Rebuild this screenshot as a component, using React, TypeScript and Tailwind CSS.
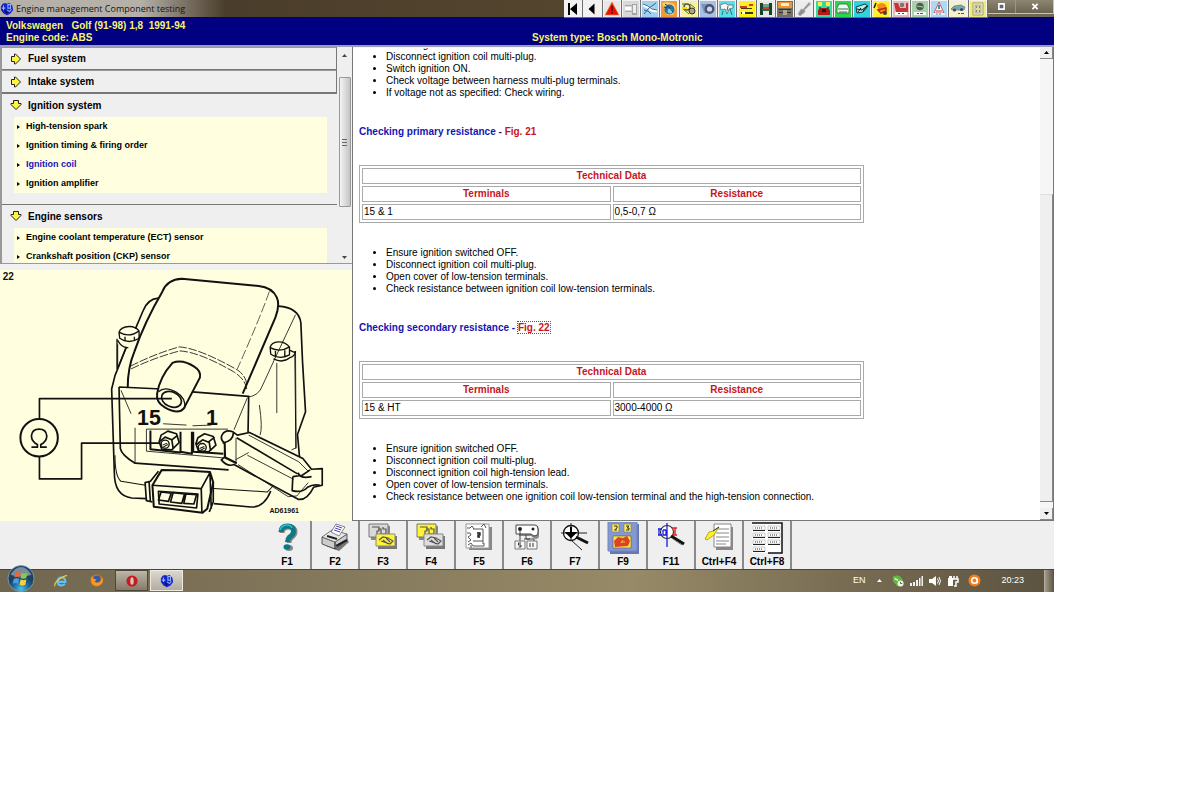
import React from "react";

type IconProps = { children: React.ReactNode; bg?: string };

function SmallIcon({ children, bg = "#f2f2f2" }: IconProps) {
  return (
    <svg viewBox="0 0 16 16" className="block h-4 w-4" aria-hidden="true">
      <rect width="16" height="16" fill={bg} />
      {children}
    </svg>
  );
}

const systems: { name: string; icon: React.ReactNode }[] = [
  { name: "First", icon: <SmallIcon><path d="M3 2h2v12H3zM12 2v12L5 8z" fill="#000" /></SmallIcon> },
  { name: "Previous", icon: <SmallIcon><path d="M10.5 2.500v11L4.500 8z" fill="#000" /></SmallIcon> },
  { name: "Warnings", icon: <SmallIcon bg="#e8e6e6"><path d="M8 1l7 13H1z" fill="#f00d0d" stroke="#d8a030" strokeWidth=".6" /><path d="M7.300 5h1.500v5H7.300zM7.300 11h1.500v1.600H7.300z" fill="#5a0000" /></SmallIcon> },
  { name: "Identification", icon: <SmallIcon bg="#d8d8d8"><path d="M2 4h9v1H2zM2 10h9v1H2z" fill="#aaa" /><path d="M2 6h6v3H2z" fill="#fff" /><path d="M9 3h5v11H9z" fill="#a4a4a4" /><path d="M10 4h3v8h-3z" fill="#eee" /></SmallIcon> },
  { name: "Service", icon: <SmallIcon bg="#9fd0f2"><path d="M1 4l5 2 4 3 5 1" stroke="#fff" strokeWidth="3" fill="none" /><path d="M1 3l5 2 4 3 5 1M2 13l5-6 7-5M2 9l4 1 3 3" stroke="#3d6686" fill="none" /></SmallIcon> },
  { name: "Engine", icon: <SmallIcon bg="#f39a36"><path d="M1 2l5-1 7 2 2 4-3 7H6z" fill="#f8d060" /><circle cx="8.500" cy="8.500" r="5" fill="#2770a8" /><circle cx="9" cy="10" r="2.500" fill="#82cce8" /><path d="M4 3l4 3 4 5M3 6l3 1" stroke="#163a5a" fill="none" /></SmallIcon> },
  { name: "Timing belt", icon: <SmallIcon bg="#f6f29b"><circle cx="6" cy="6" r="3" fill="none" stroke="#555" strokeWidth="1.500" /><circle cx="11" cy="10" r="3" fill="#a9a980" stroke="#333" /><path d="M1 3h4M2 8l6 5M9 3l5 4" stroke="#706b20" /><path d="M1 6h5v2H1z" fill="#f0e000" /></SmallIcon> },
  { name: "Wheels", icon: <SmallIcon bg="#a8bfe4"><path d="M1 3h7v3l-2 6H4z" fill="#7e93bb" /><circle cx="9.500" cy="8" r="5" fill="#48536f" /><circle cx="9.500" cy="8" r="2.600" fill="#cdd5e6" /></SmallIcon> },
  { name: "Air conditioning", icon: <SmallIcon bg="#5be0e8"><path d="M1 4l5-2 3 2 5 0v3l-4 1-2 5-2-5-4 1z" fill="#f5f5f5" stroke="#555" strokeWidth=".7" /><path d="M11 8l2 6M4 10l-1 4M9 5l-1 5" stroke="#207888" /></SmallIcon> },
  { name: "Fuses", icon: <SmallIcon bg="#fff01c"><path d="M1 5h7v2H1zM10 3h4v2h-4z" fill="#d93426" /><path d="M2 7h11v1H2zM2 11h12v2H2z" fill="#3b3a1c" /><path d="M3 10h3v3H3z" fill="#fff" /></SmallIcon> },
  { name: "Lift points", icon: <SmallIcon bg="#e5e9e5"><path d="M2 2h3v12H2zM11 2h3v12h-3z" fill="#19402a" /><path d="M5 6h6v2H5z" fill="#d73838" /><path d="M5 3h6v3H5z" fill="#75a085" /><path d="M4 8h8v2H4z" fill="#177346" /></SmallIcon> },
  { name: "Instrument display", icon: <SmallIcon bg="#777064"><path d="M1 1h14v6H1z" fill="#e99835" /><path d="M4 2h8v3H4z" fill="#fff0bd" /><path d="M2 8h12v1H2zM2 11h12v1H2z" fill="#333" /><path d="M6 9h4v5H6z" fill="#b2a78f" /></SmallIcon> },
  { name: "Repair", icon: <SmallIcon bg="#ececec"><path d="M13 1.500l1.500 1.500-6 6 .5 2-5 4-2-2 3-5 2 .5z" fill="#8e8e8e" stroke="#b0b0b0" strokeWidth=".7" /></SmallIcon> },
  { name: "Ignition", icon: <SmallIcon bg="#39d9a0"><path d="M2 1h4v4H2zM10 1h4v4h-4z" fill="#ffef32" /><path d="M2 9l3-2h6l3 2v5H2z" fill="#b51a16" /><path d="M6 8h4v3H6z" fill="#181818" /><path d="M4 6v2M12 6v2" stroke="#111" /></SmallIcon> },
  { name: "Vehicle", icon: <SmallIcon bg="#27d94a"><path d="M4 3h8l2 4v5H2V7z" fill="#eefaf0" stroke="#286b35" strokeWidth=".8" /><path d="M3 8h10M4 11h8" stroke="#3b7047" /></SmallIcon> },
  { name: "Diagnostics", icon: <SmallIcon bg="#2cd5de"><path d="M2 6l9-3 3 2-5 6-6 1z" fill="#bfe8ea" stroke="#073b42" /><path d="M3 8l5 1 5-4M4 11l3-4M9 10l4-5" stroke="#111" fill="none" /></SmallIcon> },
  { name: "Trouble codes", icon: <SmallIcon bg="#fff12c"><path d="M4 4q5-4 9 0v5q-5 4-8-1z" fill="#f38b1f" /><path d="M5 9l8-2v3l-5 2z" stroke="#b32812" fill="none" strokeWidth="1.500" /><path d="M3 2L1 7" stroke="#222" strokeWidth="1.500" /><circle cx="12" cy="12" r="2" fill="#444" /></SmallIcon> },
  { name: "Airbag", icon: <SmallIcon bg="#e7bcbc"><path d="M1 2h4l2 5h6V2h2v9H3z" fill="#c73535" /><circle cx="9" cy="4" r="2.200" fill="#777" /><path d="M2 11h12v3H2z" fill="#fff" /><path d="M5 12h2v1H5zM9 12h2v1H9z" fill="#aa2020" /></SmallIcon> },
  { name: "Steering", icon: <SmallIcon bg="#a9cfac"><circle cx="8" cy="5.500" r="3.700" fill="#4c5d4e" /><path d="M5 5l6 1" stroke="#b4c7b5" /><path d="M2 11h12v3H2z" fill="#f5f8f5" /><path d="M5 12h2v1H5zM8 12h3v1H8z" fill="#555" /></SmallIcon> },
  { name: "Key programming", icon: <SmallIcon bg="#aadaf5"><path d="M8 1l5 11H3z" fill="#f4faff" stroke="#c06060" strokeWidth="1" /><path d="M7 4h2v4H7z" fill="#5d85a8" /><path d="M2 12h12v2H2z" fill="#e6f2fa" /><path d="M5 10h6" stroke="#c33" /><path d="M5 13h5" stroke="#5d85a8" strokeDasharray="2 1" /></SmallIcon> },
  { name: "Tyres", icon: <SmallIcon bg="#f3f2cd"><path d="M1 8l3-3 7-1 4 2-1 3H2z" fill="#79a9ae" stroke="#4d7077" strokeWidth=".6" /><circle cx="4.500" cy="9" r="1.500" fill="#346" /><circle cx="11.500" cy="8.500" r="1.500" fill="#346" /><path d="M8 12h2v1H8zM11 12h3v1h-3z" fill="#555" /></SmallIcon> },
  { name: "Switches", icon: <SmallIcon bg="#f1e978"><path d="M3 2h10v12H3z" fill="#f6f3c8" stroke="#a5a06a" /><path d="M5 4h6v8H5z" fill="#ddd8b0" stroke="#777" strokeWidth=".5" /><path d="M6 5h1v2H6zM9 5h1v2H9zM6 9h1v2H6zM9 9h1v2H9z" fill="#8a865e" /></SmallIcon> },
];

function KeyIcon({ children }: { children: React.ReactNode }) {
  return <svg viewBox="0 0 36 34" className="block h-[34px] w-9" aria-hidden="true">{children}</svg>;
}

const cardShapes = (back: string, front: string) => (
  <>
    <path d="M6 4h19v14H6z" fill="#888" />
    <path d="M4 2h19v13H4z" fill={back} stroke="#777" />
    <path d="M7 5h7v4h-2v4M13 7h3v5h5V7h-3V5" fill="none" stroke="#555" strokeWidth="1.200" />
    <path d="M13 14h19v13H13z" fill="#777" />
    <path d="M11 12h19v12H11z" fill={front} stroke="#888" />
    <path d="M14 18l4-3 5 1 5 3-3 3-6-2-3-1M18 18l5 4M21 16l4 4" fill="none" stroke="#555" strokeWidth="1.200" />
  </>
);

const keys: { label: string; icon: React.ReactNode }[] = [
  {
    label: "F1",
    icon: <KeyIcon><path d="M13 11q0-6 7-6 6 0 6 5 0 3-4 6-2 2-2 5" fill="none" stroke="#888" strokeWidth="5" /><path d="M12 10q0-6 6.500-6 6 0 6 5.500 0 3-4 5.500-2 2-2 5" fill="none" stroke="#087b85" strokeWidth="5" /><path d="M11 8q2-5 7-5 4 0 5 3" fill="none" stroke="#35bfc8" strokeWidth="1.500" /><ellipse cx="20" cy="26" rx="4" ry="3" fill="#888" /><ellipse cx="18" cy="25" rx="3.500" ry="2.700" fill="#087b85" /></KeyIcon>,
  },
  {
    label: "F2",
    icon: <KeyIcon><path d="M9 24l13 5 10-9-2-3z" fill="#777" /><path d="M5 15l13 5v7L5 22zM18 20l12-8v6l-12 9z" fill="#ccc" stroke="#333" strokeWidth=".8" /><path d="M5 15l10-7 15 4-12 8z" fill="#e9e9e9" stroke="#555" strokeWidth=".8" /><path d="M14 10l5-8 9 3-6 9z" fill="#fff" stroke="#555" strokeWidth=".7" /><path d="M19 4l6 2M18 6l6 2M17 8l6 2" stroke="#4b4bbd" /><path d="M10 14l10 3M19 24l11-6" stroke="#222" strokeWidth="2" /></KeyIcon>,
  },
  { label: "F3", icon: <KeyIcon>{cardShapes("#d9d9d9", "#fff43a")}</KeyIcon> },
  { label: "F4", icon: <KeyIcon>{cardShapes("#fff43a", "#dedede")}</KeyIcon> },
  {
    label: "F5",
    icon: <KeyIcon><path d="M8 5h23v23H8z" fill="#888" /><path d="M5 2h23v24H5z" fill="#fff" stroke="#999" /><path d="M6 6h3l2-2 2 3M6 11h3l1 2-3 2 3 3-3 2M12 7h10v12H12M20 5l3-3 2 4M7 23l3-2 2 3h11v-3M10 26v-3M22 19v3" fill="none" stroke="#555" strokeWidth="1" /><path d="M16 11h3v2h-2v2h2" fill="none" stroke="#111" strokeWidth="1.300" /></KeyIcon>,
  },
  {
    label: "F6",
    icon: <KeyIcon><path d="M9 7q0-3 4-3h13q4 0 4 4v6q0 3-4 3l-4-3H10z" fill="#888" /><path d="M7 3h19q3 0 3 4v4q0 3-4 3l-3-2H7z" fill="#fff" stroke="#444" /><circle cx="11" cy="7" r="2" fill="#222" /><circle cx="24" cy="7" r="1.500" fill="#222" /><path d="M11 9v10M17 13v4h8v3M15 17h6" fill="none" stroke="#444" /><path d="M6 19h10v8H6zM18 19h10v8H18z" fill="#f8f8f8" stroke="#777" /><path d="M12 21H9.500v2H12v2H9.500M21 21v4M24 21v4" fill="none" stroke="#333" /></KeyIcon>,
  },
  {
    label: "F7",
    icon: <KeyIcon><circle cx="14" cy="11" r="7.500" fill="#fff" stroke="#111" strokeWidth="1.300" /><path d="M14 1v17M4 11h26M14 18l11 10" stroke="#222" /><path d="M14 5v9M10 11h8l-4 4z" fill="#000" stroke="#000" strokeWidth="2" /><path d="M19 15l12 6" stroke="#111" strokeWidth="3" /></KeyIcon>,
  },
  {
    label: "F9",
    icon: <KeyIcon><path d="M5 2h29v30H5z" fill="#6678b2" /><path d="M3 0h29v29H3z" fill="#8598d4" stroke="#7385bd" /><path d="M7 2h7v8H7zM19 2h7v8h-7z" fill="#ffed54" stroke="#777" strokeWidth=".6" /><path d="M9 4h3v2L9.500 8H12M21 4h3l-2 2h2v2h-3" fill="none" stroke="#333" /><path d="M8 14h18v12H8z" fill="#ffe64a" stroke="#555" strokeWidth=".6" /><path d="M9 19l4-4 5 1 4-2 3 5-2 5-13 1z" fill="#db4324" /><path d="M16 20h4M18 18l-2 3" stroke="#f5c33b" /></KeyIcon>,
  },
  {
    label: "F11",
    icon: <KeyIcon><circle cx="14" cy="10" r="6.500" fill="#fff" stroke="#333" strokeWidth="1.200" /><path d="M5 7h4M5 13h4M6 7v6M14 1v24M10 8h3M10 8v5h3v-5" fill="none" stroke="#1a1ae0" strokeWidth="1.300" /><path d="M19 6h5M19 13h5M22 6v7" stroke="#db2929" strokeWidth="1.500" /><path d="M18 14l13 8" stroke="#111" strokeWidth="3" /><path d="M20 17l9 6" stroke="#777" /></KeyIcon>,
  },
  {
    label: "Ctrl+F4",
    icon: <KeyIcon><path d="M15 5h17v23H15z" fill="#888" /><path d="M13 2h17v23H13z" fill="#fff" stroke="#888" /><path d="M17 7h11M15 11h13M15 15h13M15 19h13M15 22h10" stroke="#888" /><path d="M4 17l4-7 4-1 6-4-5 8-7 5z" fill="#ffef27" stroke="#a09620" strokeWidth=".8" /><path d="M12 9l6-4" stroke="#333" /></KeyIcon>,
  },
  {
    label: "Ctrl+F8",
    icon: (
      <KeyIcon>
        <path d="M3 1h30v30H3z" fill="#fff" /><path d="M3 1h30v30H19" fill="none" stroke="#111" strokeWidth="1.500" />
        {[[4, 4], [19, 4], [4, 11], [19, 11], [4, 18], [19, 18], [4, 25]].map(([x, y]) => (
          <g key={`${x}-${y}`}><path d={`M${x} ${y}h12v4h-12z`} fill="#fff" stroke="#aaa" strokeWidth=".6" /><path d={`M${x + 2} ${y + 2}h8`} stroke="#333" strokeDasharray="1 1" /><path d={`M${x} ${y + 4.5}h12`} stroke="#222" /></g>
        ))}
      </KeyIcon>
    ),
  },
];

function ArrowIcon({ open }: { open?: boolean }) {
  return (
    <svg viewBox="0 0 12 12" className="h-3 w-3 shrink-0" aria-hidden="true">
      <path
        d={open ? "M3.500 1.500h5v3h2.500v1L6 10.500 1 5.500v-1h2.500z" : "M1.500 3.500v5h3V11h1l5-5-5-5h-1v2.500z"}
        fill="#fff53a"
        stroke="#222"
        strokeWidth="1"
      />
    </svg>
  );
}

function Section({ title, items }: { title: string; items?: string[] }) {
  return (
    <section className={items ? "border-t border-[#777] pb-[11px]" : "border-t border-r border-b border-t-[#999] border-r-[#777] border-b-[#777]"}>
      <h2>
        <button type="button" aria-expanded={!!items} className={`flex w-full items-center gap-[6px] pl-2 text-left text-[10px] font-bold ${items ? "h-[23px] pb-px" : "h-[21px]"}`}>
          <ArrowIcon open={!!items} />
          {title}
        </button>
      </h2>
      {items && (
        <ul className="mr-[10px] ml-3 bg-[#ffffdf]">
          {items.map((item) => (
            <li key={item} className="flex h-[19px] items-center gap-[6px] pl-[3px] text-[9px] font-bold">
              <span className="h-0 w-0 border-y-2 border-l-[3px] border-y-transparent border-l-black" />
              <a href="#item" className={item === "Ignition coil" ? "text-[#1414b8]" : "text-black"}>{item}</a>
            </li>
          ))}
        </ul>
      )}
    </section>
  );
}

function CoilDrawing() {
  return (
    <svg viewBox="0 6 1053 750" className="block h-auto w-full bg-[#ffffdf]" role="img" aria-label="Ignition coil test connections" fill="none" stroke="#111" strokeWidth="4" strokeLinejoin="round">
      {/* housing */}
      <path d="M474 90q-32 2-46 38l-23 54M378 236l-34 86-10 40 8 250q0 70 52 76l44 2M640 705l110 10q40 2 60-48M832 114q62 4 68 50l5 116 9 150-24 68 6 68" strokeWidth="5" />
      <path d="M382 358q0-60 20-108 30-88 84-180 14-36 58-38l230 22q40 4 54 34 10 22-4 60L726 376" strokeWidth="6" />
      <path d="M806 70q-30 84-96 232" strokeWidth="2" strokeDasharray="30 8" />
      <path d="M390 294q70-36 146-58 60 4 176 70 26 20 26 44M392 302q70-34 146-54 60 4 160 62 36 22 40 52" strokeWidth="2.500" strokeDasharray="26 5" />
      <path d="M884 140l-64 136-34 74q-12 34-46 36M828 284v150M776 410q10 70 2 90M884 252l2 286-14 6" strokeWidth="2.500" />
      <path d="M882 250l3 290M352 228v76M344 560q0 64 18 78l74 12M640 660l160 10q20-20 26-34" strokeWidth="3" />
      {/* fixing bolts */}
      <path d="M356 192l2 18q28 20 58 0v-22q-12-14-30-13-24 1-30 17zM356 192q30 18 60-4M374 206v14M402 206v12M350 212v90M352 216q12 24 32 22M378 236l-24 60" strokeWidth="4" />
      <path d="M808 236l2 22q26 18 56 2v-24q-14-16-34-15-20 1-24 17zM808 238q30 16 58-2M824 248v18M852 246v18M818 272q28 14 50-4 16-6 16-20M866 246l18 8" strokeWidth="4" />
      {/* terminal panel */}
      <path d="M356 356l126 6M566 370l178 14-2 108M356 356l4 184q4 20 44 44l280 20" strokeWidth="5" />
      <path d="M362 366l30 70M404 478v104M740 388l-40 96M488 466l70 4M576 472l56-2M438 482v66l230 20M438 482h244" strokeWidth="2.500" />
      {/* high tension outlet */}
      <path d="M470 376q8-50 46-92 30-12 66 12 20 12 16 32l-48 92q-16 20-56-2-28-16-24-42z" fill="#ffffdf" strokeWidth="6" />
      <path d="M474 370q20-18 54 2 30 18 24 48" strokeWidth="4" />
      <ellipse cx="513" cy="393" rx="31" ry="22" transform="rotate(24 513 393)" strokeWidth="5" />
      <text x="410" y="470" fontFamily="Liberation Sans, Arial, sans-serif" fontSize="64" fontWeight="700" fill="#111" stroke="none">15</text>
      <text x="616" y="470" fontFamily="Liberation Sans, Arial, sans-serif" fontSize="64" fontWeight="700" fill="#111" stroke="none">1</text>
      {/* terminal nuts */}
      <path d="M450 486v56l90 10M578 490v60l90 6M540 490v60l34 6v-66" strokeWidth="6" />
      <path d="M482 500l20-12 26 8 8 26-22 22-30-2-8-22zM476 520l18-14 20 8 4 26M514 514l18-14" fill="#ffffdf" strokeWidth="5" />
      <circle cx="494" cy="527" r="12" strokeWidth="4" /><path d="M486 530l14-6M488 536l14-8" strokeWidth="3" />
      <path d="M592 508l20-12 26 8 8 26-22 20-30-2-8-22zM588 528l18-14 20 8 4 26M624 520l18-14" fill="#ffffdf" strokeWidth="5" />
      <circle cx="605" cy="537" r="12" strokeWidth="4" /><path d="M597 540l14-6M599 546l14-8" strokeWidth="3" />
      {/* open cover */}
      <path d="M664 500q10-18 32-10l14 10 36-8 160 78 26 32 32-2v50l-26 6q-20 40-46 36L700 588q-20 8-38-14l12-10-2-40q-14-10-8-24z" fill="#ffffdf" strokeWidth="5" />
      <path d="M698 494q0 24-32 30M708 508l182 108M672 524v42M876 624l-2 42q30 8 46-10 16-10 38-6M876 624l28-4 24-16M892 612q4 20 40 12" strokeWidth="5" />
      <path d="M706 508v78M744 500l150 80 30 30M704 574l40-22M712 588l150 96 26-2 34-40M740 560l138 72" strokeWidth="2.500" />
      <path d="M672 566l36 18" strokeWidth="7" />
      {/* connector */}
      <path d="M456 650l28-46q70 0 144 6l10 32-18 78-14 12-146-18z" fill="#ffffdf" strokeWidth="6" />
      <path d="M456 650l146 10 26-48M602 660l2 72M628 612l4 108M474 608l-24 30-16 4 4 54 18 4M446 640l4 60M638 642v58l-12 30" strokeWidth="5" />
      <path d="M474 668l118 8-4 42-112-12z" strokeWidth="5" />
      <path d="M482 670l-8 24 30 4 8-24zM518 672l-8 28 34 4 8-28zM556 676l-6 28 30 2 8-28z" strokeWidth="5" />
      {/* ohmmeter leads */}
      <path d="M118 454V391h396M118 563v68h126V524h236" strokeWidth="5" />
      <circle cx="117" cy="508" r="56" strokeWidth="6" />
      <path d="M94 536h18v-8q-18-8-18-26 2-20 23-20t23 20q0 18-18 26v8h18" strokeWidth="5" />
      <text x="8" y="36" fontFamily="Liberation Sans, Arial, sans-serif" fontSize="30" fontWeight="700" fill="#111" stroke="none">22</text>
      <text x="806" y="734" fontFamily="Liberation Sans, Arial, sans-serif" fontSize="21" fontWeight="700" fill="#111" stroke="none">AD61961</text>
    </svg>
  );
}

function Steps({ items }: { items: string[] }) {
  return (
    <ul className="ml-[27px] list-disc text-[10px] leading-3">
      {items.map((item) => <li key={item}>{item}</li>)}
    </ul>
  );
}

function DataTable({ terminals, resistance }: { terminals: string; resistance: string }) {
  const cell = "h-4 border border-[#aaa] p-0";
  return (
    <table className="w-[505px] max-w-full table-fixed border-separate border-spacing-[2px] border border-[#aaa] text-[10px] leading-[14px]">
      <thead className="text-[#c8141c]">
        <tr><th colSpan={2} className={cell}>Technical Data</th></tr>
        <tr><th className={cell}>Terminals</th><th className={cell}>Resistance</th></tr>
      </thead>
      <tbody>
        <tr><td className={`${cell} pl-px`}>{terminals}</td><td className={`${cell} pl-px`}>{resistance}</td></tr>
      </tbody>
    </table>
  );
}

function ScrollArrow({ up }: { up?: boolean }) {
  return (
    <button type="button" aria-label={up ? "Scroll up" : "Scroll down"} className="flex h-3 w-full shrink-0 items-center justify-center border-r border-b border-[#888] bg-[#f0f0f0]">
      <svg viewBox="0 0 5 3" className="h-[3px] w-[5px]"><path d={up ? "M0 3L2.500 0 5 3z" : "M0 0l2.500 3L5 0z"} fill="#000" /></svg>
    </button>
  );
}

function AppGlobe() {
  return (
    <svg viewBox="0 0 16 16" className="h-[14px] w-[14px] shrink-0" aria-hidden="true">
      <path d="M3 2l3-1 2 1 3-1 3 3 1 5-3 4-4 2-4-2-3-4V5z" fill="#1722c8" />
      <path d="M4 4v5M2 7h4M9 3h3v4H9zM8 9l3 2 2-3" fill="none" stroke="#8eb2ff" strokeWidth="1.200" />
      <path d="M6 10l2 3" stroke="#0a0d66" strokeWidth="2" />
    </svg>
  );
}

export default function App() {
  return (
    <div className="min-h-screen bg-white text-black [font-family:'Liberation_Sans',Arial,sans-serif]">
      <div className="w-full max-w-[1054px] bg-[#efefef]">
        <header>
          <div className="flex h-[17px] items-start bg-[#6f6855]">
            <div className="flex h-full flex-1 items-center gap-[2px] bg-linear-to-r from-[#b5b1a9] from-25% via-[#4a3d2b] via-40% to-[#54452e]">
              <AppGlobe />
              <h1 className="text-[9px] leading-4 text-[#17130e] [font-family:'Open_Sans',sans-serif]">Engine management Component testing</h1>
            </div>
            <nav aria-label="Systems" className="relative flex h-[18px] w-[424px] bg-[#aaa]">
              {systems.map(({ name, icon }) => (
                <button key={name} type="button" aria-label={name} className="flex flex-1 items-center justify-center border-r border-b border-[#6f6f6f] bg-[#f2f2f2]">{icon}</button>
              ))}
            </nav>
            <div className="flex h-[14px] w-[66px] border-r border-b border-[#c9c4b5] bg-linear-to-b from-[#8c8672] to-[#6b6450]">
              <button type="button" aria-label="Restore window" className="flex flex-3 items-center justify-center border-r border-[#9b9583]">
                <svg viewBox="0 0 8 8" className="h-[7px] w-[7px]"><path d="M1 1h6v6H1z" fill="#5d6480" stroke="#fff" strokeWidth="1.800" /></svg>
              </button>
              <button type="button" aria-label="Close window" className="flex flex-4 items-center justify-center">
                <svg viewBox="0 0 8 8" className="h-[7px] w-2"><path d="M1 1l6 6M7 1L1 7" stroke="#fff" strokeWidth="2" /></svg>
              </button>
            </div>
          </div>
          <div className="flex h-[30px] items-end border-b-2 border-[#9c9cb4] bg-[#000080] pb-px text-[10px] leading-3 font-bold text-[#f7f56b]">
            <div className="w-1/2 pl-[6px]">
              <p className="whitespace-pre">Volkswagen   Golf (91-98) 1,8  1991-94</p>
              <p>Engine code: ABS</p>
            </div>
            <p className="pl-[5px]">System type: Bosch Mono-Motronic</p>
          </div>
        </header>

        <div className="flex">
          <aside className="flex w-[352px] shrink-0 flex-col">
            <div className="flex h-[217px] overflow-hidden border-b border-l-2 border-[#999]">
              <div className="min-w-0 flex-1">
                <Section title="Fuel system" />
                <Section title="Intake system" />
                <Section title="Ignition system" items={["High-tension spark", "Ignition timing & firing order", "Ignition coil", "Ignition amplifier"]} />
                <Section title="Engine sensors" items={["Engine coolant temperature (ECT) sensor", "Crankshaft position (CKP) sensor"]} />
              </div>
              <div className="flex w-[15px] flex-col items-center pt-[7px] pb-1">
                <svg viewBox="0 0 5 3" className="h-[3px] w-[5px]"><path d="M0 3L2.500 0 5 3z" fill="#444" /></svg>
                <div className="mt-5 flex h-[130px] w-3 items-center justify-center rounded-[1px] border border-[#999] bg-linear-to-r from-[#f4f4f4] to-[#c4c4c8]">
                  <div className="h-[7px] w-[5px] border-y border-[#666] pt-[2px]"><div className="h-px bg-[#666]" /></div>
                </div>
                <svg viewBox="0 0 5 3" className="mt-auto h-[3px] w-[5px]"><path d="M0 0l2.500 3L5 0z" fill="#444" /></svg>
              </div>
            </div>
            <div className="h-[6px] bg-[#f1f1f1]" />
            <CoilDrawing />
          </aside>

          <main className="flex min-w-0 flex-1 overflow-hidden border-b border-l border-[#777] bg-white">
            <article className="min-w-0 flex-1 overflow-hidden border-t border-[#f4f4f4] pl-[6px]">
              <div className="-mt-[9px]">
                <Steps items={["Ensure ignition switched OFF.", "Disconnect ignition coil multi-plug.", "Switch ignition ON.", "Check voltage between harness multi-plug terminals.", "If voltage not as specified: Check wiring."]} />
              </div>
              <h2 className="mt-[26px] mb-[26px] text-[10px] leading-[14px] font-bold text-[#1414b4]">
                Checking primary resistance - <a href="#fig21" className="text-[#c8141c]">Fig. 21</a>
              </h2>
              <DataTable terminals="15 & 1" resistance="0,5-0,7 Ω" />
              <div className="mt-6">
                <Steps items={["Ensure ignition switched OFF.", "Disconnect ignition coil multi-plug.", "Open cover of low-tension terminals.", "Check resistance between ignition coil low-tension terminals."]} />
              </div>
              <h2 className="mt-[26px] mb-[26px] text-[10px] leading-[14px] font-bold text-[#1414b4]">
                Checking secondary resistance - <a href="#fig22" className="text-[#c8141c] outline-1 outline-[#2a6f6a] outline-dotted">Fig. 22</a>
              </h2>
              <DataTable terminals="15 & HT" resistance="3000-4000 Ω" />
              <div className="mt-6">
                <Steps items={["Ensure ignition switched OFF.", "Disconnect ignition coil multi-plug.", "Disconnect ignition coil high-tension lead.", "Open cover of low-tension terminals.", "Check resistance between one ignition coil low-tension terminal and the high-tension connection."]} />
              </div>
            </article>
            <div className="flex w-[14px] shrink-0 flex-col border-r border-[#777] bg-[#f6f6f6]">
              <ScrollArrow up />
              <div className="flex-135" />
              <div className="flex-306 border-t border-r border-b border-t-[#ddd] border-r-[#888] border-b-[#888] bg-[#efefef]" />
              <div className="h-[6px]" />
              <ScrollArrow />
            </div>
          </main>
        </div>

        <nav aria-label="Function keys" className="flex h-12 pl-[264px]">
          {keys.map(({ label, icon }) => (
            <button key={label} type="button" className="flex w-12 shrink-0 flex-col items-center border-r-2 border-[#8a8a8a] pt-px text-[10px] leading-[11px] font-bold">
              {icon}
              {label}
            </button>
          ))}
        </nav>

        <footer className="flex h-[23px] items-center border-t border-[#4b4437] bg-linear-to-r from-[#70664f] via-[#978a68] via-60% to-[#5b5240]">
          <button type="button" aria-label="Start" className="relative -mt-1 ml-[7px] shrink-0">
            <svg viewBox="0 0 28 28" className="block h-[27px] w-7">
              <defs><radialGradient id="orb" cx=".5" cy=".9"><stop offset="0" stopColor="#49c4e8" /><stop offset=".6" stopColor="#1e6a9c" /><stop offset="1" stopColor="#1d4261" /></radialGradient></defs>
              <circle cx="14" cy="14" r="13.500" fill="url(#orb)" stroke="#8ba9b8" strokeWidth=".8" />
              <path d="M3 10q5-8 11-8t11 8q-11 4-22 0z" fill="#fff" opacity=".4" />
              <path d="M8 8q3-2 5.500-.5L12.500 13q-3-1.500-5.500 0z" fill="#ed6635" /><path d="M14.500 8q3 1.500 6 0l-1 5.500q-3 1.500-6 0z" fill="#8cc84a" />
              <path d="M6.500 14.500q3-1.500 5.500 0l-1 5q-3-1.500-5.500 0z" fill="#4c9ee8" /><path d="M13.500 15q3 1.500 6 0l-1 5.500q-3 1.500-6 0z" fill="#fbd043" />
            </svg>
          </button>
          <button type="button" aria-label="Internet Explorer" className="ml-[19px]">
            <svg viewBox="0 0 16 16" className="block h-[14px] w-[14px]"><path d="M3.500 9h9.500q0-5-4.500-5T4 9.500q.5 3.500 4.500 3.500 3 0 4-2" fill="none" stroke="#5fc0f4" strokeWidth="2.300" /><path d="M1 14q-1-4 5-8 7-5 9-4" fill="none" stroke="#f5c83a" strokeWidth="1.300" /></svg>
          </button>
          <button type="button" aria-label="Firefox" className="ml-[22px]">
            <svg viewBox="0 0 14 14" className="block h-[13px] w-[13px]"><circle cx="7" cy="7" r="6.500" fill="#e8731c" /><circle cx="7.500" cy="5.500" r="4" fill="#315f9d" /><path d="M1 3l3 2 3 1-2 2q2 3 6 0 3-3 1-6 4 5 0 9-6 4-10-1z" fill="#f59b25" /></svg>
          </button>
          <button type="button" aria-label="Opera" className="ml-3 flex h-[21px] w-[33px] items-center justify-center border border-[#4f4637] bg-linear-to-b from-[#bdb7aa] to-[#857b69]">
            <svg viewBox="0 0 14 14" className="h-3 w-3"><circle cx="7" cy="7" r="6.500" fill="#c91820" /><ellipse cx="7" cy="7" rx="2" ry="4.500" fill="#cfc7c0" /></svg>
          </button>
          <button type="button" aria-label="Component testing window" className="ml-[2px] flex h-[21px] w-[33px] items-center justify-center border border-[#eeeae0] bg-linear-to-b from-[#dad7d1] to-[#b4ad9e]"><AppGlobe /></button>

          <div className="ml-auto flex h-full items-center gap-[6px] text-[9px] text-white">
            <span className="mr-[6px]">EN</span>
            <svg viewBox="0 0 5 3" className="mr-1 h-[3px] w-[5px]"><path d="M0 3L2.500 0 5 3z" fill="#fff" /></svg>
            <svg viewBox="0 0 14 14" className="h-3 w-3"><path d="M1 2q5-3 9 0l3 5-2 6H6L1 7z" fill="#63b541" /><path d="M3 4l4 2" stroke="#d4f3bd" strokeWidth="2" /><circle cx="10" cy="10" r="3.500" fill="#f4f4ec" /><path d="M10 8v2h2" fill="none" stroke="#444" /></svg>
            <svg viewBox="0 0 13 10" className="h-[10px] w-[13px]"><path d="M0 7h2v3H0zM3 6h2v4H3zM6 4h2v6H6zM9 2h1.500v8H9zM11.500 0H13v10h-1.500z" fill="#f2f2f2" /></svg>
            <svg viewBox="0 0 12 12" className="h-3 w-3"><path d="M0 4h3l4-3v10L3 8H0z" fill="#fff" /><path d="M8.500 3.500q2 2.500 0 5M10 2q3 4 0 8" fill="none" stroke="#fff" /></svg>
            <svg viewBox="0 0 12 12" className="h-3 w-3"><path d="M1 3h5v8H1zM2 1h3v2H2z" fill="#fff" /><path d="M7 1v3M10 1v3M6 4h5v3H9v4H7" fill="none" stroke="#fff" strokeWidth="1.500" /></svg>
            <svg viewBox="0 0 14 14" className="ml-[3px] h-[13px] w-[13px]"><circle cx="7" cy="7" r="6.500" fill="#f08022" /><circle cx="7" cy="7" r="3" fill="none" stroke="#fff" strokeWidth="1.700" /><path d="M10 5v5" stroke="#fff" strokeWidth="1.500" /></svg>
            <time className="mr-[14px] ml-[14px] text-[9px]">20:23</time>
            <button type="button" aria-label="Show desktop" className="h-full w-[10px] border-l border-[#b5ad9c] bg-linear-to-r from-[#a39b89] to-[#5b5342]" />
          </div>
        </footer>
      </div>
    </div>
  );
}
